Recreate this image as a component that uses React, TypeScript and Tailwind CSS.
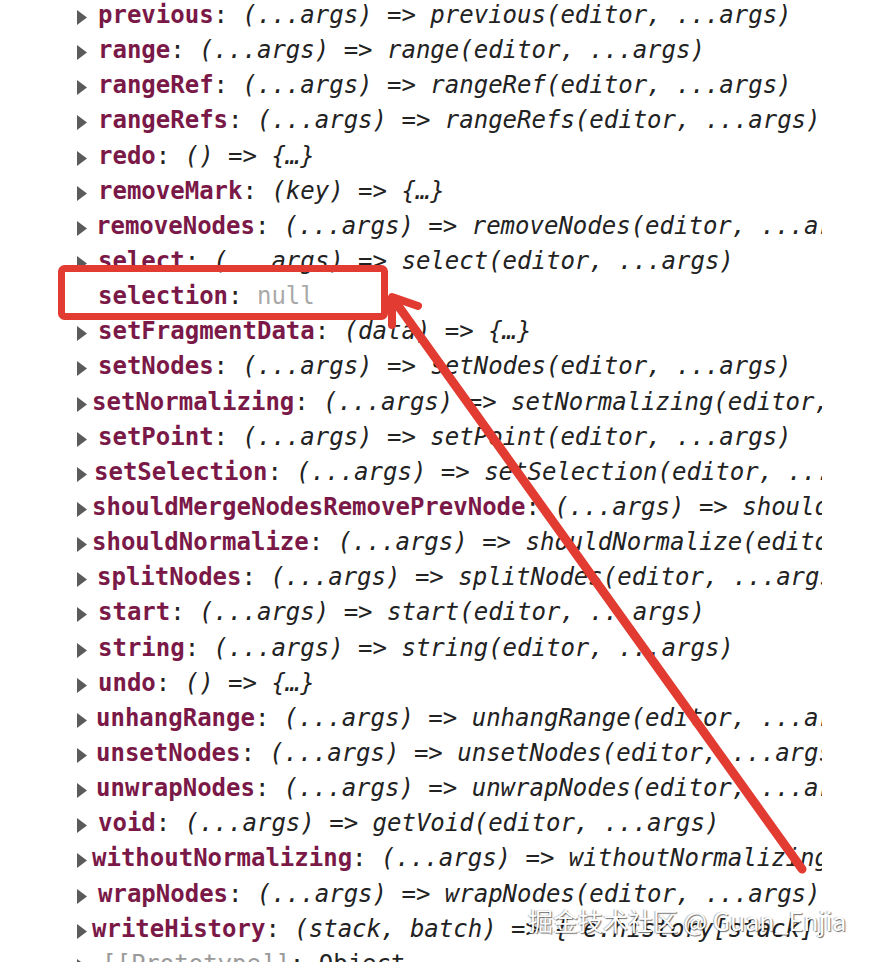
const rows = [
  { k: "previous", v: "(...args) => previous(editor, ...args)", x: "ml-[11px]" },
  { k: "range", v: "(...args) => range(editor, ...args)", x: "ml-[11px]" },
  { k: "rangeRef", v: "(...args) => rangeRef(editor, ...args)", x: "ml-[11px]" },
  { k: "rangeRefs", v: "(...args) => rangeRefs(editor, ...args)", x: "ml-[11px]" },
  { k: "redo", v: "() => {…}", x: "ml-[11px]" },
  { k: "removeMark", v: "(key) => {…}", x: "ml-[11px]" },
  { k: "removeNodes", v: "(...args) => removeNodes(editor, ...args)", x: "ml-[9px]" },
  { k: "select", v: "(...args) => select(editor, ...args)", x: "ml-[11px]" },
  { k: "selection", v: "null", x: "ml-[11px]", leaf: true },
  { k: "setFragmentData", v: "(data) => {…}", x: "ml-[11px]" },
  { k: "setNodes", v: "(...args) => setNodes(editor, ...args)", x: "ml-[11px]" },
  { k: "setNormalizing", v: "(...args) => setNormalizing(editor, ...args)", x: "ml-[5px]" },
  { k: "setPoint", v: "(...args) => setPoint(editor, ...args)", x: "ml-[11px]" },
  { k: "setSelection", v: "(...args) => setSelection(editor, ...args)", x: "ml-[7px]" },
  { k: "shouldMergeNodesRemovePrevNode", v: "(...args) => shouldMergeNodesRemovePrevNode(editor, ...args)", x: "ml-[5px]" },
  { k: "shouldNormalize", v: "(...args) => shouldNormalize(editor, ...args)", x: "ml-[5px]" },
  { k: "splitNodes", v: "(...args) => splitNodes(editor, ...args)", x: "ml-[10px]" },
  { k: "start", v: "(...args) => start(editor, ...args)", x: "ml-[11px]" },
  { k: "string", v: "(...args) => string(editor, ...args)", x: "ml-[11px]" },
  { k: "undo", v: "() => {…}", x: "ml-[11px]" },
  { k: "unhangRange", v: "(...args) => unhangRange(editor, ...args)", x: "ml-[9px]" },
  { k: "unsetNodes", v: "(...args) => unsetNodes(editor, ...args)", x: "ml-[9px]" },
  { k: "unwrapNodes", v: "(...args) => unwrapNodes(editor, ...args)", x: "ml-[9px]" },
  { k: "void", v: "(...args) => getVoid(editor, ...args)", x: "ml-[11px]" },
  { k: "withoutNormalizing", v: "(...args) => withoutNormalizing(editor, ...args)", x: "ml-[5px]" },
  { k: "wrapNodes", v: "(...args) => wrapNodes(editor, ...args)", x: "ml-[11px]" },
  { k: "writeHistory", v: "(stack, batch) => { e.history[stack].push(batch)}", x: "ml-[5px]" },
];

const Caret = ({ hidden }: { hidden?: boolean }) => (
  <svg width="10" height="15" viewBox="0 0 10 15" className={hidden ? "invisible shrink-0 mt-[4px]" : "shrink-0 mt-[4px]"}>
    <polygon points="0,0 10,7.5 0,15" fill="#5b5b5b" />
  </svg>
);

export default function App() {
  return (
    <div className="relative w-[870px] h-[962px] bg-white overflow-hidden">
      <div className="w-[822px] overflow-hidden -mt-[2px] font-['DejaVu_Sans_Mono','Liberation_Mono',monospace] text-[24px] leading-[35.15px] text-[#222]">
        {rows.map((r) => (
          <div key={r.k} className="flex items-center h-[35.15px] pl-[77px] whitespace-nowrap">
            <Caret hidden={r.leaf} />
            <span className={r.x}>
              <span className="font-bold text-[#7a1947]">{r.k}</span>
              <span>: </span>
              {r.leaf ? (
                <span className="text-[#a9a9a9]">{r.v}</span>
              ) : (
                <span className="italic">{r.v}</span>
              )}
            </span>
          </div>
        ))}
        <div className="flex items-center h-[35.15px] pl-[77px] whitespace-nowrap">
          <Caret />
          <span className="ml-[15px]">
            <span className="text-[#9a9a9a]">[[Prototype]]</span>
            <span>: Object</span>
          </span>
        </div>
      </div>

      {/* annotation: red box + arrow */}
      <svg className="absolute left-0 top-0 pointer-events-none" width="870" height="962" viewBox="0 0 870 962">
        <rect x="61.5" y="268.5" width="323" height="48" rx="3" fill="none" stroke="#e23b31" strokeWidth="7" />
        <line x1="394" y1="300" x2="802" y2="869" stroke="#e23b31" strokeWidth="9" strokeLinecap="round" />
        <polyline points="418,306 392,297 392,325" fill="none" stroke="#e23b31" strokeWidth="8" strokeLinecap="round" strokeLinejoin="round" />
      </svg>

      {/* watermark */}
      <div className="absolute left-[528px] top-[902px] text-[25px] leading-[36px] text-white font-['Noto_Sans_CJK_SC','Noto_Sans',sans-serif] [text-shadow:1px_1px_1px_rgba(0,0,0,0.55),-1px_0_1px_rgba(0,0,0,0.3)] whitespace-nowrap">
        掘金技术社区 @ Guan_Enjia
      </div>
    </div>
  );
}
